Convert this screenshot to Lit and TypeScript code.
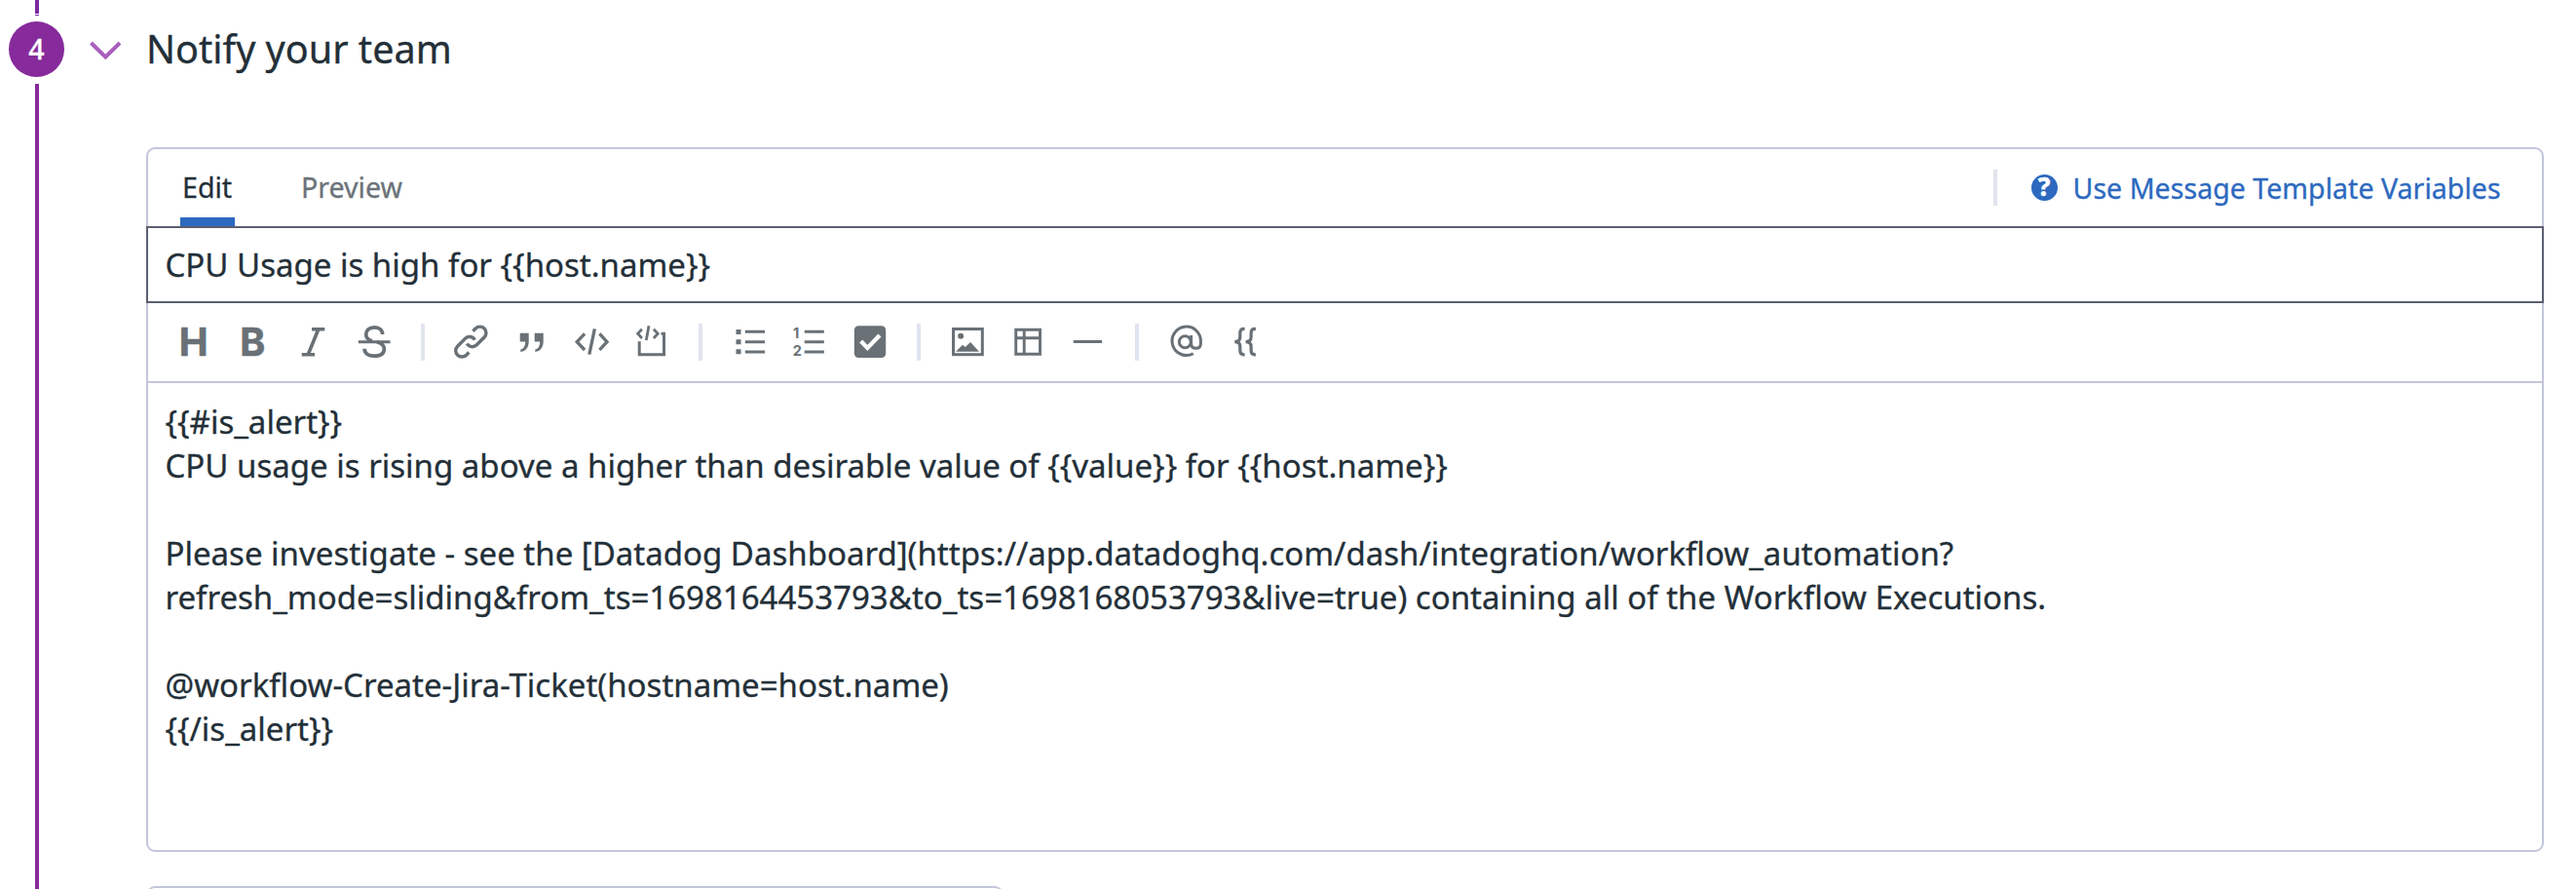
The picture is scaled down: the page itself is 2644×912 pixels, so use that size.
import { LitElement, html, svg, css } from "lit";
import { customElement } from "lit/decorators.js";

type Tool = { name: string; art: unknown };

const TOOL_GROUPS: Tool[][] = [
  [
    { name: "Heading", art: svg`<text class="glyph" x="19.6" y="34.3" text-anchor="middle">H</text>` },
    { name: "Bold", art: svg`<text class="glyph" x="18.3" y="34.3" text-anchor="middle" textLength="26" lengthAdjust="spacingAndGlyphs">B</text>` },
    { name: "Italic", art: svg`<path d="M18 6.8H31.3M7.7 32.8H21M24.8 6.8L14.2 32.8" stroke-width="3.6"/>` },
    { name: "Strikethrough", art: svg`<path d="M3.8 19.7H36.5" stroke-width="3"/><path d="M28.6 12C28.6 7.5 25 4.9 20 4.9C15 4.9 11.7 8 11.7 12C11.7 16 14.5 18 18 19M23 20C27.5 21 30.3 23.5 30.3 27C30.3 32 26 34.2 20.2 34.2C14 34.2 10.1 31.5 10.1 26.8" stroke-width="3.7"/>` },
  ],
  [
    { name: "Link", art: svg`<g stroke-width="3.4"><path d="M21.4 8.7L24.1 6A6.3 6.3 0 0 1 33.1 15L25.3 22.8A6.3 6.3 0 0 1 15.3 21.5"/><path transform="rotate(180 19.35 19.6)" d="M21.4 8.7L24.1 6A6.3 6.3 0 0 1 33.1 15L25.3 22.8A6.3 6.3 0 0 1 15.3 21.5"/></g>` },
    { name: "Quote", art: svg`<g class="solid"><path d="M7.7 10.7h9v8.6c0 6.6-3.2 10-8.4 10.7v-2.5c3-.7 4.7-3 4.900-8.1H7.700z"/><path d="M22.7 10.7h9v8.600c0 6.600-3.200 10-8.400 10.700v-2.500c3-.7 4.700-3 4.900-8.100H22.700z"/></g>` },
    { name: "Inline code", art: svg`<path d="M13.1 11.3L5.2 19.7L13.1 28M28.4 11.3L36 19.7L28.4 28M23.4 6.3L17.8 32.7" stroke-width="3.3"/>` },
    { name: "Code block", art: svg`<path d="M7.2 19.3V32.7H32.5V11.2H29.5" stroke-width="3"/><path d="M9.9 6.7L5.6 11.3L9.9 16M21.9 6.7L26.2 11.3L21.9 16M17 3.3L14.3 18" stroke-width="2.8"/>` },
  ],
  [
    { name: "Bulleted list", art: svg`<path class="solid" d="M5.5 7h5v5h-5zM5.5 17.2h5v5h-5zM5.5 27.3h5v5h-5z"/><path d="M14.8 9.2H35M14.8 19.7H35M14.8 30H35" stroke-width="3"/>` },
    { name: "Numbered list", art: svg`<text class="digit" x="3" y="15.7">1</text><text class="digit" x="2.8" y="33.7">2</text><path d="M14.7 9.2H34.8M14.7 19.7H34.8M14.7 30H34.8" stroke-width="3"/>` },
    { name: "Checklist", art: svg`<rect class="solid" x="3.8" y="3.2" width="32.4" height="32.8" rx="4.5"/><path class="tick" d="M10.7 19L17.3 25.9L29.9 12.9" stroke-width="4.3"/>` },
  ],
  [
    { name: "Image", art: svg`<rect x="5.5" y="6.5" width="29.8" height="26.2" stroke-width="3"/><circle class="solid" cx="13.1" cy="13.7" r="3"/><path class="solid" d="M8 29.7L15 22.7L17.8 25L23.1 20L32 29.7z"/>` },
    { name: "Table", art: svg`<path d="M7.7 7.2H32.5V32.2H7.7zM16.2 7V32M7.7 15.7H32.5" stroke-width="2.9"/>` },
    { name: "Divider", art: svg`<path d="M5.75 19.5H35" stroke-width="3"/>` },
  ],
  [
    { name: "Mention", art: svg`<g stroke-width="3"><path d="M27.8 31.7A14.7 14.7 0 1 1 35.4 19.4v2c0 3.2-2 4.8-4.9 4.8s-4.9-1.6-4.9-4.8V13"/><circle cx="19.3" cy="19.7" r="6"/></g>` },
    { name: "Variable", art: svg`<g stroke-width="3.2"><path id="a" d="M18.6 6.4h-.8c-3 0-4 1.3-4 4v4.3c0 3.3-1.8 4.9-5.5 4.9c3.7 0 5.5 1.6 5.5 4.9v4.3c0 2.7 1 4 4 4h.8"/><path d="M29.9 6.4h-.8c-3 0-4 1.3-4 4v4.3c0 3.3-1.8 4.9-5.5 4.9c3.7 0 5.5 1.6 5.5 4.9v4.3c0 2.7 1 4 4 4h.8"/></g>` },
  ],
];

const MESSAGE = `{{#is_alert}}
CPU usage is rising above a higher than desirable value of {{value}} for {{host.name}}

Please investigate - see the [Datadog Dashboard](https://app.datadoghq.com/dash/integration/workflow_automation?
refresh_mode=sliding&from_ts=1698164453793&to_ts=1698168053793&live=true) containing all of the Workflow Executions.

@workflow-Create-Jira-Ticket(hostname=host.name)
{{/is_alert}}`;

@customElement("format-toolbar")
class FormatToolbar extends LitElement {
  static styles = css`
    :host { display: flex; align-items: center; box-sizing: border-box; height: 82px; padding-left: 16.25px; border-bottom: 2px solid #c3c6dc; }
    .tool { width: 61.5px; display: flex; justify-content: center; }
    .icon { width: 40px; height: 40px; display: block; fill: none; stroke: #697177; overflow: visible; }
    .solid { fill: #697177; stroke: none; }
    .tick { stroke: #fff; }
    .glyph { font: 700 40px Inter, sans-serif; fill: #697177; stroke: #697177; stroke-width: 0.6px; }
    .digit { font: 700 14.5px Inter, sans-serif; fill: #697177; stroke: none; }
    .rule { width: 4px; height: 38px; margin: 0 17.625px; background: #e1e4ee; }
  `;
  render() {
    return TOOL_GROUPS.map((group, i) => html`
      ${i ? html`<span class="rule"></span>` : ""}
      ${group.map((t) => html`<span class="tool" role="button" aria-label=${t.name}><svg class="icon" viewBox="0 0 40 40">${t.art}</svg></span>`)}
    `);
  }
}

@customElement("app-root")
class AppRoot extends LitElement {
  static styles = css`
    :host { display: block; height: 912px; overflow: hidden; background: #fff; color: #232f38; font-family: "Noto Sans", sans-serif; -webkit-text-stroke: 0.3px currentColor; }
    .step { display: flex; height: 912px; }
    .rail { width: 57px; margin-left: 9px; display: flex; flex-direction: column; align-items: center; flex: none; }
    .line-top { width: 4px; height: 14px; background: #7a2a9c; margin-left: 1px; }
    .line-dash { width: 4px; height: 1px; margin: 1px 0 6px 1px; background: #7a2a9c; }
    .number { width: 57px; height: 57px; border-radius: 50%; background: #872a9b; color: #fff; font-size: 28.5px; font-weight: 500; line-height: 57px; text-align: center; }
    .line { width: 4px; flex: 1; margin: 7px 0 0 1px; background: #872a9b; }
    .content { flex: 1; display: flex; flex-direction: column; }
    .header { height: 151px; flex: none; box-sizing: border-box; padding: 23px 0 0 26px; display: flex; align-items: flex-start; }
    .chevron { width: 34px; height: 20px; margin-top: 19px; fill: none; stroke: #a85fbc; stroke-width: 4; }
    .title { font-size: 39.6px; line-height: 54px; margin-left: 24px; }
    .editor { margin-left: 84px; width: 2461px; height: 723px; box-sizing: border-box; border: 2px solid #c3c6dc; border-radius: 9px; flex: none; }
    .tabs { display: flex; height: 79px; padding-left: 33px; }
    .tab { height: 79px; box-sizing: border-box; padding-left: 2px; font-size: 28.6px; line-height: 78px; color: #6b7379; }
    .tab.active { width: 56px; margin-right: 66px; color: #232f38; border-bottom: 9px solid #2c69bf; }
    .help { margin-left: auto; margin-right: 42.4px; display: flex; align-items: center; color: #2c69bf; font-size: 28.6px; }
    .bar { width: 4px; height: 37px; background: #e1e4ee; margin-right: 35px; }
    .q { width: 27px; height: 27px; border-radius: 50%; background: #2c69bf; color: #fff; font: 800 26px/25px "Noto Sans", sans-serif; text-align: center; margin-right: 16px; }
    .subject { margin: 0 -2px; height: 79px; box-sizing: border-box; border: 2px solid #5a5f70; padding-left: 17.5px; font-size: 33px; line-height: 75px; }
    .message { padding: 17px 17.5px; font-size: 33px; line-height: 45px; white-space: pre; }
    .next { margin: 35px 0 0 84px; width: 880px; height: 60px; box-sizing: border-box; border: 2px solid #c3c6dc; border-radius: 9px; flex: none; }
  `;

  render() {
    return html`
      <div class="step">
        <div class="rail">
          <div class="line-top"></div><div class="line-dash"></div>
          <div class="number">4</div>
          <div class="line"></div>
        </div>
        <div class="content">
          <div class="header">
            <svg class="chevron" viewBox="0 0 34 20"><path d="M1.5 2L16.3 16.5L31 2"/></svg>
            <div class="title">Notify your team</div>
          </div>
          <div class="editor">
            <div class="tabs">
              <div class="tab active">Edit</div>
              <div class="tab">Preview</div>
              <div class="help"><span class="bar"></span><span class="q">?</span><span>Use Message Template Variables</span></div>
            </div>
            <div class="subject">CPU Usage is high for {{host.name}}</div>
            <format-toolbar></format-toolbar>
            <div class="message">${MESSAGE}</div>
          </div>
          <div class="next"></div>
        </div>
      </div>
    `;
  }
}
